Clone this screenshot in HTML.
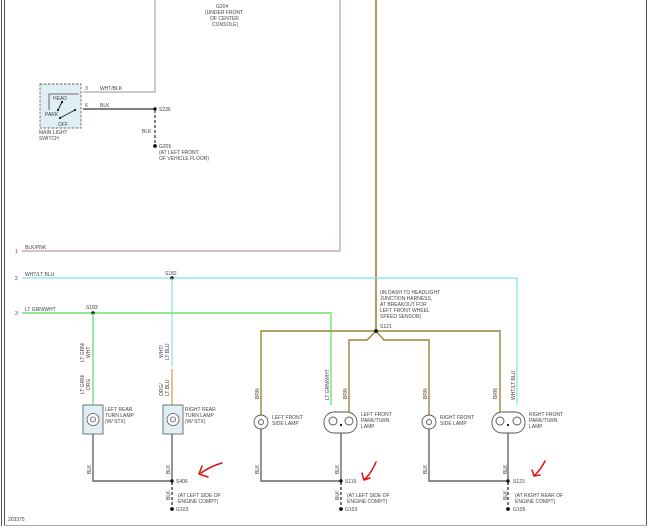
<!DOCTYPE html>
<html><head><meta charset="utf-8"><style>
html,body{margin:0;padding:0;background:#fff;width:650px;height:528px;overflow:hidden}
svg{display:block}
text{font-family:"Liberation Sans",sans-serif;font-size:5px;fill:#444}
</style></head><body>
<svg width="650" height="528" viewBox="0 0 650 528" xmlns="http://www.w3.org/2000/svg">
<line x1="1.5" y1="0" x2="1.5" y2="526" stroke="#555" stroke-width="1"/>
<line x1="4.5" y1="0" x2="4.5" y2="526" stroke="#555" stroke-width="1"/>
<line x1="646.5" y1="0" x2="646.5" y2="526" stroke="#555" stroke-width="1"/>
<line x1="4" y1="525.5" x2="647" y2="525.5" stroke="#aaa" stroke-width="1"/>

<text x="216" y="8">G204</text>
<text x="205" y="14">(UNDER FRONT</text>
<text x="210" y="20">OF CENTER</text>
<text x="212" y="26">CONSOLE)</text>

<polyline points="155,0 155,92 83,92" fill="none" stroke="#aaa" stroke-width="1.2"/>
<text x="100" y="90">WHT/BLK</text>
<text x="85" y="90">3</text>
<line x1="83" y1="109" x2="155" y2="109" stroke="#555" stroke-width="1.4"/>
<text x="100" y="107">BLK</text>
<text x="85" y="107">6</text>
<circle cx="155" cy="109" r="1.7" fill="#111"/>
<text x="159" y="111">S236</text>
<line x1="155" y1="110" x2="155" y2="145" stroke="#333" stroke-width="1.2" stroke-dasharray="3,2"/>
<text x="142" y="133">BLK</text>
<circle cx="155" cy="146" r="1.9" fill="#111"/>
<text x="159" y="148">G205</text>
<text x="159" y="154">(AT LEFT FRONT</text>
<text x="159" y="160">OF VEHICLE FLOOR)</text>

<rect x="40" y="84" width="41" height="44" fill="#e0eef6" stroke="#666" stroke-width="0.9" stroke-dasharray="2.5,1.5"/>
<polyline points="49,110 49,94 79,94" fill="none" stroke="#444" stroke-width="0.8"/>
<text x="53" y="100">HEAD</text>
<text x="45" y="116">PARK</text>
<text x="58" y="126">OFF</text>
<line x1="58" y1="110" x2="62" y2="102" stroke="#222" stroke-width="0.9"/>
<circle cx="58" cy="110" r="1.1" fill="#111"/>
<circle cx="62" cy="102" r="1.1" fill="#111"/>
<line x1="60" y1="118" x2="75" y2="110" stroke="#222" stroke-width="0.9"/>
<circle cx="60" cy="118" r="1.1" fill="#111"/>
<circle cx="75" cy="110" r="1.1" fill="#111"/>
<text x="39" y="134">MAIN LIGHT</text>
<text x="39" y="140">SWITCH</text>

<polyline points="22,251 340,251 340,0" fill="none" stroke="#c49aa3" stroke-width="1.2"/>
<text x="25" y="249">BLK/PNK</text>
<text x="15" y="253">1</text>

<line x1="376" y1="0" x2="376" y2="331" stroke="#9c8238" stroke-width="1.6"/>

<polyline points="22,278 517,278 517,405" fill="none" stroke="#80e4ec" stroke-width="1.2"/>
<text x="25" y="276">WHT/LT BLU</text>
<text x="15" y="280">2</text>
<circle cx="172" cy="278" r="1.7" fill="#111"/>
<text x="165" y="275">S182</text>
<line x1="172" y1="278" x2="172" y2="367" stroke="#80e4ec" stroke-width="1.2"/>
<line x1="172" y1="369" x2="172" y2="405" stroke="#c8a040" stroke-width="1.2"/>

<polyline points="22,313 331,313 331,405" fill="none" stroke="#6ee46e" stroke-width="1.4"/>
<text x="25" y="311">LT GRN/WHT</text>
<text x="15" y="315">3</text>
<circle cx="93" cy="313" r="1.7" fill="#111"/>
<text x="86" y="309">S183</text>
<line x1="93" y1="313" x2="93" y2="405" stroke="#6ee46e" stroke-width="1.4"/>

<g>
<text transform="translate(84,362) rotate(-90)">LT GRN/</text>
<text transform="translate(90,358) rotate(-90)">WHT</text>
<text transform="translate(84,394) rotate(-90)">LT GRN/</text>
<text transform="translate(90,390) rotate(-90)">ORG</text>
<text transform="translate(163,358) rotate(-90)">WHT/</text>
<text transform="translate(169,360) rotate(-90)">LT BLU</text>
<text transform="translate(163,396) rotate(-90)">ORG/</text>
<text transform="translate(169,396) rotate(-90)">LT BLU</text>
<text transform="translate(259,399) rotate(-90)">BRN</text>
<text transform="translate(329,400) rotate(-90)">LT GRN/WHT</text>
<text transform="translate(347,399) rotate(-90)">BRN</text>
<text transform="translate(427,399) rotate(-90)">BRN</text>
<text transform="translate(497,399) rotate(-90)">BRN</text>
<text transform="translate(515,400) rotate(-90)">WHT/LT BLU</text>
<text transform="translate(91,474) rotate(-90)">BLK</text>
<text transform="translate(170,474) rotate(-90)">BLK</text>
<text transform="translate(259,474) rotate(-90)">BLK</text>
<text transform="translate(339,474) rotate(-90)">BLK</text>
<text transform="translate(427,474) rotate(-90)">BLK</text>
<text transform="translate(507,474) rotate(-90)">BLK</text>
<text transform="translate(170,500) rotate(-90)">BLK</text>
<text transform="translate(339,500) rotate(-90)">BLK</text>
<text transform="translate(507,500) rotate(-90)">BLK</text>
</g>

<g stroke="#555" stroke-width="0.8">
<rect x="83" y="405" width="20" height="29" fill="#e0eef6"/>
<circle cx="93" cy="419.5" r="6" fill="#fff"/>
<circle cx="93" cy="419.5" r="2.5" fill="none"/>
<rect x="163" y="405" width="20" height="29" fill="#e0eef6"/>
<circle cx="173" cy="419.5" r="6" fill="#fff"/>
<circle cx="173" cy="419.5" r="2.5" fill="none"/>
</g>
<text x="105" y="411">LEFT REAR</text>
<text x="105" y="417">TURN LAMP</text>
<text x="105" y="423">(W/ STX)</text>
<text x="185" y="411">RIGHT REAR</text>
<text x="185" y="417">TURN LAMP</text>
<text x="185" y="423">(W/ STX)</text>

<polyline points="261,415 261,331 500,331 500,412" fill="none" stroke="#9c8238" stroke-width="1.4"/>
<polyline points="376,331 367,340 349,340 349,412" fill="none" stroke="#9c8238" stroke-width="1.4"/>
<polyline points="376,331 384,340 429,340 429,415" fill="none" stroke="#9c8238" stroke-width="1.4"/>
<circle cx="376" cy="331" r="1.9" fill="#111"/>
<text x="380" y="294">(IN DASH TO HEADLIGHT</text>
<text x="380" y="300">JUNCTION HARNESS,</text>
<text x="380" y="306">AT BREAKOUT FOR</text>
<text x="380" y="312">LEFT FRONT WHEEL</text>
<text x="380" y="318">SPEED SENSOR)</text>
<text x="380" y="328">S121</text>

<g stroke="#555" stroke-width="0.9" fill="#fff">
<circle cx="261" cy="422" r="7"/>
<circle cx="261" cy="422" r="2.5"/>
<rect x="324" y="412" width="33" height="21" rx="10"/>
<circle cx="333" cy="421" r="4"/>
<circle cx="349" cy="421" r="4"/>
<circle cx="429" cy="422" r="7"/>
<circle cx="429" cy="422" r="2.5"/>
<rect x="492" y="412" width="33" height="21" rx="10"/>
<circle cx="500" cy="421" r="4"/>
<circle cx="517" cy="421" r="4"/>
</g>
<circle cx="341" cy="425" r="1.1" fill="#111"/>
<circle cx="508" cy="425" r="1.1" fill="#111"/>
<text x="272" y="419">LEFT FRONT</text>
<text x="272" y="425">SIDE LAMP</text>
<text x="361" y="416">LEFT FRONT</text>
<text x="361" y="422">PARK/TURN</text>
<text x="361" y="428">LAMP</text>
<text x="440" y="419">RIGHT FRONT</text>
<text x="440" y="425">SIDE LAMP</text>
<text x="529" y="416">RIGHT FRONT</text>
<text x="529" y="422">PARK/TURN</text>
<text x="529" y="428">LAMP</text>

<g fill="none" stroke="#666" stroke-width="1.4">
<polyline points="93,434 93,481 172,481 172,434"/>
<polyline points="261,429 261,481 341,481 341,433"/>
<polyline points="429,429 429,481 508,481 508,433"/>
</g>
<g stroke="#222" stroke-width="1.2" stroke-dasharray="3,2">
<line x1="172" y1="482" x2="172" y2="507"/>
<line x1="341" y1="482" x2="341" y2="507"/>
<line x1="508" y1="482" x2="508" y2="507"/>
</g>
<g fill="#111">
<circle cx="172" cy="481" r="1.7"/><circle cx="172" cy="509" r="1.9"/>
<circle cx="341" cy="481" r="1.7"/><circle cx="341" cy="509" r="1.9"/>
<circle cx="508" cy="481" r="1.7"/><circle cx="508" cy="509" r="1.9"/>
</g>
<text x="176" y="483">S406</text>
<text x="178" y="497">(AT LEFT SIDE OF</text>
<text x="178" y="503">ENGINE COMPT)</text>
<text x="176" y="511">G103</text>
<text x="345" y="483">S119</text>
<text x="347" y="497">(AT LEFT SIDE OF</text>
<text x="347" y="503">ENGINE COMPT)</text>
<text x="345" y="511">G103</text>
<text x="513" y="483">S123</text>
<text x="515" y="497">(AT RIGHT REAR OF</text>
<text x="515" y="503">ENGINE COMPT)</text>
<text x="513" y="511">G105</text>

<g fill="none" stroke="#e01010" stroke-width="1.5" stroke-linecap="round" stroke-linejoin="round">
<path d="M222,463 Q211,466 201,473"/><path d="M202,466 L199,474 L208,477"/>
<path d="M376,462 Q372,472 365,479"/><path d="M362,473 L364,480 L370,478"/>
<path d="M545,461 Q541,469 535,475"/><path d="M532,470 L534,476 L540,475"/>
</g>

<text x="8" y="521">203375</text>
</svg>
</body></html>
